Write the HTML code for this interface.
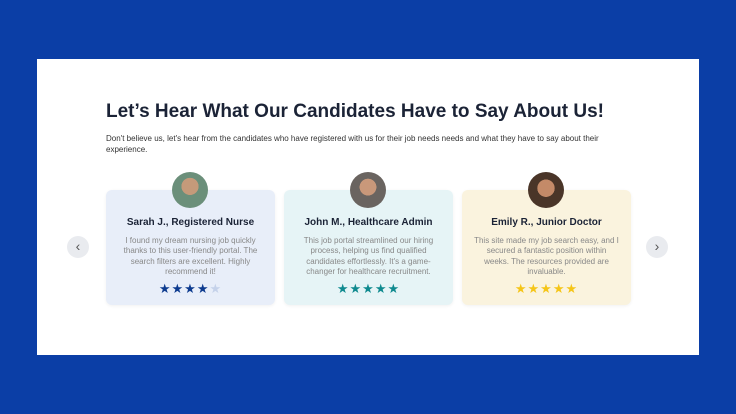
<!DOCTYPE html><html><head><style>
body{margin:0;width:736px;height:414px;background:#0b3ea6;font-family:"Liberation Sans",sans-serif;position:relative;overflow:hidden}
.panel{position:absolute;left:37px;top:59px;width:662px;height:296px;background:#fff}
h1{position:absolute;left:106px;top:101px;margin:0;font-size:19px;font-weight:bold;color:#1b2336;letter-spacing:0px}
.sub{position:absolute;left:106px;top:133px;width:500px;font-size:8px;line-height:11px;color:#333}
.card{position:absolute;top:190px;width:169px;height:115px;border-radius:6px;text-align:center;box-shadow:0 1px 3px rgba(0,0,0,.06)}
.av{position:absolute;top:-18px;left:66px;width:36px;height:36px;border-radius:50%}
.nm{position:absolute;top:27px;width:100%;font-size:10px;font-weight:bold;color:#1b2336}
.tx{position:absolute;top:46px;left:12px;width:145px;font-size:8px;line-height:10.3px;color:#888}
.st{position:absolute;top:92px;width:100%;font-size:13px;letter-spacing:1px;line-height:14px}
.arr{position:absolute;top:236px;width:22px;height:22px;border-radius:50%;background:#e9ebef;color:#555;font-size:14px;text-align:center;line-height:21px}
</style></head><body>
<div class="panel"></div>
<h1>Let’s Hear What Our Candidates Have to Say About Us!</h1>
<div class="sub">Don't believe us, let's hear from the candidates who have registered with us for their job needs needs and what they have to say about their experience.</div>
<div class="arr" style="left:67px">&#8249;</div>
<div class="arr" style="left:646px">&#8250;</div>
<div class="card" style="left:106px;background:#e8eef9">
<div class="av" style="background:radial-gradient(circle at 50% 40%,#c59a7a 0 30%,#6b8f7a 31%)"></div>
<div class="nm">Sarah J., Registered Nurse</div>
<div class="tx">I found my dream nursing job quickly thanks to this user-friendly portal. The search filters are excellent. Highly recommend it!</div>
<div class="st" style="color:#0d3b8f">★★★★<span style="color:#c5d2ea">★</span></div></div>
<div class="card" style="left:284px;background:#e6f4f6">
<div class="av" style="background:radial-gradient(circle at 50% 42%,#c9987a 0 30%,#6a6460 31%)"></div>
<div class="nm">John M., Healthcare Admin</div>
<div class="tx">This job portal streamlined our hiring process, helping us find qualified candidates effortlessly. It's a game-changer for healthcare recruitment.</div>
<div class="st" style="color:#0f8a8f">★★★★★</div></div>
<div class="card" style="left:462px;background:#faf3de">
<div class="av" style="background:radial-gradient(circle at 50% 45%,#c48a68 0 32%,#4a3528 33%)"></div>
<div class="nm">Emily R., Junior Doctor</div>
<div class="tx">This site made my job search easy, and I secured a fantastic position within weeks. The resources provided are invaluable.</div>
<div class="st" style="color:#f5c518">★★★★★</div></div>
</body></html>
